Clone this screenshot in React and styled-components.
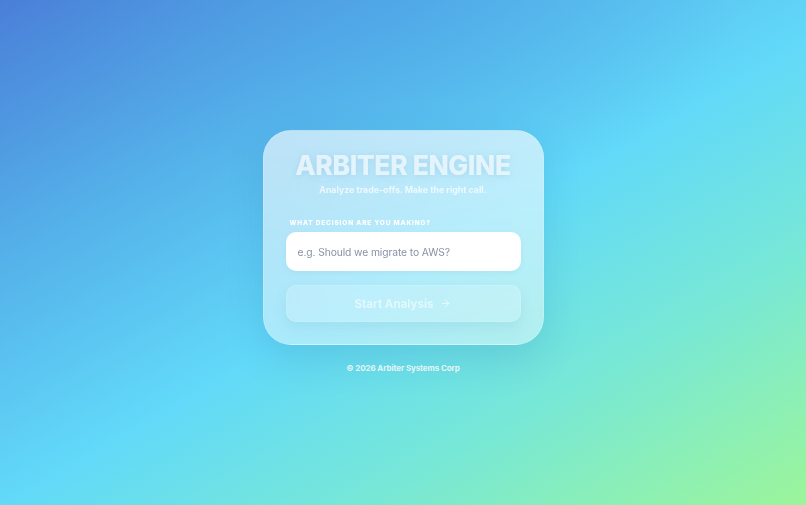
import React, { useState } from 'react';
import styled, { createGlobalStyle } from 'styled-components';

const GlobalStyle = createGlobalStyle`
  * { box-sizing: border-box; }
  html, body { margin: 0; padding: 0; height: 100%; }
  body {
    font-family: Inter, "Noto Sans", "Liberation Sans", sans-serif;
    -webkit-font-smoothing: antialiased;
  }
`;

const Page = styled.div`
  min-height: 100vh;
  display: flex;
  flex-direction: column;
  align-items: center;
  justify-content: center;
  background:
    radial-gradient(ellipse 60% 55% at 50% 0%, rgba(74, 160, 230, 0.35), transparent 70%),
    linear-gradient(150deg, #4a7fd8 0%, #55b3ea 28%, #62d9f9 52%, #78e8d6 74%, #9cf59a 100%);
`;

const Card = styled.div`
  width: 281px;
  padding: 18px 22px 22px;
  border-radius: 28px;
  background: linear-gradient(180deg, rgba(255, 255, 255, 0.62) 0%, rgba(255, 255, 255, 0.45) 100%);
  border: 1px solid rgba(255, 255, 255, 0.18);
  box-shadow: 0 14px 36px rgba(40, 110, 160, 0.18);
  backdrop-filter: blur(14px);
  display: flex;
  flex-direction: column;
`;

const Title = styled.h1`
  margin: 0;
  text-align: center;
  font-size: 26.5px;
  line-height: 32px;
  font-weight: 800;
  letter-spacing: -0.4px;
  color: rgba(240, 249, 253, 0.82);
  text-shadow: 0 1px 6px rgba(120, 180, 220, 0.35);
`;

const Subtitle = styled.p`
  margin: 2px 0 0;
  text-align: center;
  font-size: 8.8px;
  line-height: 14px;
  font-weight: 700;
  color: rgba(255, 255, 255, 0.72);
`;

const Label = styled.label`
  display: block;
  margin: 21px 0 4px;
  padding-left: 4px;
  font-size: 6.5px;
  line-height: 10px;
  font-weight: 800;
  letter-spacing: 0.85px;
  text-transform: uppercase;
  color: #ffffff;
`;

const Input = styled.input`
  width: 100%;
  height: 39px;
  border: none;
  outline: none;
  border-radius: 10px;
  background: #ffffff;
  padding: 0 12px;
  font-family: inherit;
  font-size: 10.3px;
  letter-spacing: -0.1px;
  color: #3b4457;
  box-shadow: 0 2px 6px rgba(60, 130, 170, 0.08);
  &::placeholder { color: #8891a5; }
`;

const StartButton = styled.button`
  margin-top: 14px;
  height: 37px;
  width: 100%;
  border: 1px solid rgba(255, 255, 255, 0.12);
  border-radius: 10px;
  background: rgba(255, 255, 255, 0.18);
  box-shadow: 0 6px 14px rgba(40, 120, 160, 0.1);
  display: flex;
  align-items: center;
  justify-content: center;
  gap: 7px;
  font-family: inherit;
  font-size: 11.5px;
  font-weight: 700;
  color: rgba(255, 255, 255, 0.55);
  cursor: pointer;
`;

const Footer = styled.div`
  margin: 17px 0 1px;
  font-size: 8px;
  line-height: 12px;
  font-weight: 700;
  letter-spacing: -0.1px;
  color: rgba(255, 255, 255, 0.92);
`;

const ArrowIcon = () => (
  <svg width="11" height="11" viewBox="0 0 24 24" fill="none" stroke="currentColor" strokeWidth="2.2" strokeLinecap="round" strokeLinejoin="round">
    <path d="M5 12h14" />
    <path d="M12 5l7 7-7 7" />
  </svg>
);

export default function App() {
  const [decision, setDecision] = useState('');

  return (
    <>
      <GlobalStyle />
      <Page>
        <Card>
          <Title>ARBITER ENGINE</Title>
          <Subtitle>Analyze trade-offs. Make the right call.</Subtitle>
          <Label htmlFor="decision">What decision are you making?</Label>
          <Input
            id="decision"
            value={decision}
            onChange={e => setDecision(e.target.value)}
            placeholder="e.g. Should we migrate to AWS?"
          />
          <StartButton disabled={!decision.trim()}>
            Start Analysis <ArrowIcon />
          </StartButton>
        </Card>
        <Footer>© 2026 Arbiter Systems Corp</Footer>
      </Page>
    </>
  );
}
